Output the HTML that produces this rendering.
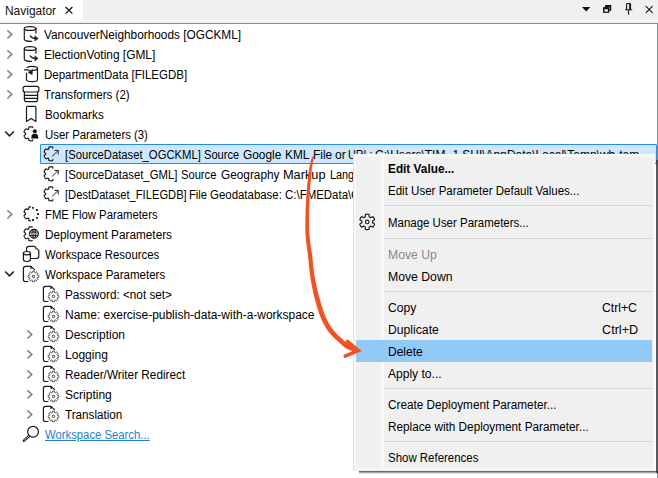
<!DOCTYPE html>
<html><head><meta charset="utf-8"><title>Navigator</title>
<style>
html,body{margin:0;padding:0;}
body{width:658px;height:478px;position:relative;overflow:hidden;background:#fff;font-family:"Liberation Sans",sans-serif;font-size:12px;color:#000;}
.abs{position:absolute;}
.t{position:absolute;transform-origin:0 0;white-space:nowrap;line-height:14px;font-size:12px;color:#000;}
.lnk{color:#1a7fd6;text-decoration:underline;}
.b{font-weight:bold;}
.dis{color:#8a8a8a;}
#hdr{color:#111;font-size:12.8px;}
#hbar{left:0;top:0;width:658px;height:20px;background:#f0f0f0;}
#tab{left:0;top:0;width:83px;height:20px;background:#fff;}
#hline{left:0;top:23px;width:658px;height:1px;background:#848c99;}
#hline2{left:0;top:21px;width:658px;height:2px;background:#f4f4f4;}
#vline{left:657px;top:23px;width:1px;height:455px;background:#848c99;}
#sel{left:40px;top:144px;width:615px;height:18px;background:#cce8ff;border:1px solid #2a8ae6;border-radius:1px;}
#treeclip{left:0;top:0;width:657px;height:478px;overflow:hidden;}
#shr{left:655.7px;top:160px;width:2.6px;height:313px;background:linear-gradient(to right,rgba(30,32,36,0.85),rgba(60,60,60,0.45));}
#shb{left:359px;top:470.6px;width:299px;height:3.4px;background:linear-gradient(to bottom,rgba(30,32,36,0.8),rgba(60,60,60,0.35) 60%,rgba(90,90,90,0));}
#menu{left:353px;top:154px;width:302.4px;height:316.6px;background:#f9f9f9;overflow:hidden;}
#menu .in{position:absolute;left:-353px;top:-154px;width:658px;height:478px;}
#mborder{left:353px;top:154px;width:1px;height:317px;background:#e0e0e0;}
#mborderb{left:353px;top:470px;width:303px;height:1px;background:#ececec;}
#mbg{left:356px;top:156.6px;width:296.8px;height:311.2px;background:#f0f0f0;}
#gutline{left:380.8px;top:156.6px;width:3.4px;height:310.8px;background:#f8f8f8;}
.sep{position:absolute;left:384.2px;width:267.8px;height:1px;background:#d7d7d7;}
#hl{left:356.2px;top:340px;width:295.8px;height:21.8px;background:#91c9f7;}
svg{position:absolute;left:0;top:0;}
</style></head><body>
<div class="abs" id="hbar"></div><div class="abs" id="tab"></div>
<div class="abs" id="hline2"></div><div class="abs" id="hline"></div><div class="abs" id="vline"></div>
<div class="abs" id="treeclip">
<div class="abs" id="sel"></div>
<span id="r1" class="t " style="left:44.3px;top:28.0px;transform:scaleX(0.9860)">VancouverNeighborhoods [OGCKML]</span>
<span id="r2" class="t " style="left:44.3px;top:48.0px;transform:scaleX(0.9932)">ElectionVoting [GML]</span>
<span id="r3" class="t " style="left:44.3px;top:68.0px;transform:scaleX(0.9579)">DepartmentData [FILEGDB]</span>
<span id="r4" class="t " style="left:44.3px;top:88.0px;transform:scaleX(0.9639)">Transformers (2)</span>
<span id="r5" class="t " style="left:44.8px;top:108.0px;transform:scaleX(0.9795)">Bookmarks</span>
<span id="r6" class="t " style="left:44.8px;top:128.0px;transform:scaleX(0.9466)">User Parameters (3)</span>
<span id="r7_0" class="t " style="left:65.1px;top:148.0px;transform:scaleX(0.9383)">[SourceDataset_OGCKML]</span>
<span id="r7_1" class="t " style="left:204.4px;top:148.0px;transform:scaleX(0.9256)">Source</span>
<span id="r7_2" class="t " style="left:243.3px;top:148.0px;transform:scaleX(0.9896)">Google</span>
<span id="r7_3" class="t " style="left:285.3px;top:148.0px;transform:scaleX(0.9843)">KML</span>
<span id="r7_4" class="t " style="left:312.9px;top:148.0px;transform:scaleX(0.9926)">File</span>
<span id="r7_5" class="t " style="left:335.3px;top:148.0px;transform:scaleX(1.0120)">or</span>
<span id="r7_6" class="t " style="left:348.0px;top:148.0px;transform:scaleX(0.8923)">URL:</span>
<span id="r7_7" class="t " style="left:375.3px;top:148.0px;transform:scaleX(0.9963)">C:\Users\TIM~1.SHI\AppData\Local\Temp\wb-tem</span>
<span id="r8_0" class="t " style="left:65.1px;top:168.0px;transform:scaleX(0.9475)">[SourceDataset_GML]</span>
<span id="r8_1" class="t " style="left:181.3px;top:168.0px;transform:scaleX(0.9308)">Source</span>
<span id="r8_2" class="t " style="left:220.8px;top:168.0px;transform:scaleX(0.9853)">Geography</span>
<span id="r8_3" class="t " style="left:282.9px;top:168.0px;transform:scaleX(1.0621)">Markup</span>
<span id="r8_4" class="t " style="left:329.7px;top:168.0px;transform:scaleX(0.9028)">Language</span>
<span id="r9_0" class="t " style="left:65.1px;top:188.0px;transform:scaleX(0.9310)">[DestDataset_FILEGDB]</span>
<span id="r9_1" class="t " style="left:189.3px;top:188.0px;transform:scaleX(0.9357)">File</span>
<span id="r9_2" class="t " style="left:209.7px;top:188.0px;transform:scaleX(0.9535)">Geodatabase:</span>
<span id="r9_3" class="t " style="left:284.5px;top:188.0px;transform:scaleX(0.9544)">C:\FMEData\</span>
<span id="r9_4" class="t " style="left:350.8px;top:188.0px;transform:scaleX(1.0713)">Output</span>
<span id="r10" class="t " style="left:44.8px;top:208.0px;transform:scaleX(0.9434)">FME Flow Parameters</span>
<span id="r11" class="t " style="left:44.8px;top:228.0px;transform:scaleX(0.9815)">Deployment Parameters</span>
<span id="r12" class="t " style="left:44.8px;top:248.0px;transform:scaleX(0.9477)">Workspace Resources</span>
<span id="r13" class="t " style="left:44.8px;top:268.0px;transform:scaleX(0.9604)">Workspace Parameters</span>
<span id="r14" class="t " style="left:65.1px;top:288.0px;transform:scaleX(0.9771)">Password: &lt;not set&gt;</span>
<span id="r15" class="t " style="left:65.1px;top:308.0px;transform:scaleX(0.9976)">Name: exercise-publish-data-with-a-workspace</span>
<span id="r16" class="t " style="left:65.1px;top:328.0px;transform:scaleX(0.9995)">Description</span>
<span id="r17" class="t " style="left:65.1px;top:348.0px;transform:scaleX(1.0042)">Logging</span>
<span id="r18" class="t " style="left:65.1px;top:368.0px;transform:scaleX(0.9813)">Reader/Writer Redirect</span>
<span id="r19" class="t " style="left:65.1px;top:388.0px;transform:scaleX(1.0024)">Scripting</span>
<span id="r20" class="t " style="left:65.1px;top:408.0px;transform:scaleX(0.9725)">Translation</span>
<span id="r21" class="t lnk" style="left:44.8px;top:428.0px;transform:scaleX(0.9418)">Workspace Search...</span>
<span id="hdr" class="t " style="left:5.3px;top:3.5px;transform:scaleX(0.9328)">Navigator</span>
<svg width="658" height="478" viewBox="0 0 658 478"><path d="M7.4 30.3 L11.8 34.4 L7.4 38.5" fill="none" stroke="#858585" stroke-width="1.6"/>
<path d="M7.4 50.3 L11.8 54.4 L7.4 58.5" fill="none" stroke="#858585" stroke-width="1.6"/>
<path d="M7.4 70.3 L11.8 74.4 L7.4 78.5" fill="none" stroke="#858585" stroke-width="1.6"/>
<path d="M7.4 90.3 L11.8 94.4 L7.4 98.5" fill="none" stroke="#858585" stroke-width="1.6"/>
<path d="M7.4 210.3 L11.8 214.4 L7.4 218.5" fill="none" stroke="#858585" stroke-width="1.6"/>
<path d="M27.4 330.3 L31.8 334.4 L27.4 338.5" fill="none" stroke="#858585" stroke-width="1.6"/>
<path d="M27.4 350.3 L31.8 354.4 L27.4 358.5" fill="none" stroke="#858585" stroke-width="1.6"/>
<path d="M27.4 370.3 L31.8 374.4 L27.4 378.5" fill="none" stroke="#858585" stroke-width="1.6"/>
<path d="M27.4 390.3 L31.8 394.4 L27.4 398.5" fill="none" stroke="#858585" stroke-width="1.6"/>
<path d="M27.4 410.3 L31.8 414.4 L27.4 418.5" fill="none" stroke="#858585" stroke-width="1.6"/>
<path d="M5.2 131.5 L9.5 135.8 L13.8 131.5" fill="none" stroke="#222" stroke-width="1.6"/>
<path d="M5.2 271.5 L9.5 275.8 L13.8 271.5" fill="none" stroke="#222" stroke-width="1.6"/>
<g transform="translate(0,0)" fill="none" stroke="#1a1a1a" stroke-width="1.2" stroke-linecap="round" stroke-linejoin="round"><ellipse cx="30.1" cy="28.5" rx="5.8" ry="1.95"/><path d="M24.3 28.3 V39.3 C24.3 40.6 27.5 41.6 31.6 41.4"/><path d="M35.9 28.3 V33.2"/><path d="M30.2 35.8 C31.4 37.6 32.6 38.4 35.6 38.4"/><path d="M35.1 36 L38.1 38.4 L35.1 40.8 Z" fill="#1a1a1a" stroke-width="0.6"/></g>
<g transform="translate(0,20)" fill="none" stroke="#1a1a1a" stroke-width="1.2" stroke-linecap="round" stroke-linejoin="round"><ellipse cx="30.1" cy="28.5" rx="5.8" ry="1.95"/><path d="M24.3 28.3 V39.3 C24.3 40.6 27.5 41.6 31.6 41.4"/><path d="M35.9 28.3 V33.2"/><path d="M30.2 35.8 C31.4 37.6 32.6 38.4 35.6 38.4"/><path d="M35.1 36 L38.1 38.4 L35.1 40.8 Z" fill="#1a1a1a" stroke-width="0.6"/></g>
<g fill="none" stroke="#1a1a1a" stroke-width="1.2" stroke-linecap="round" stroke-linejoin="round"><path d="M27.3 67.6 C28.5 66.7 30 66.4 32 66.4 C35 66.4 37.5 67.4 37.5 68.6 V79.5 C37.5 80.7 35 81.6 32 81.6 C29 81.6 26.5 80.7 26.5 79.5 V73.4"/><path d="M33 70.5 C35.5 70.3 37.5 69.6 37.5 68.6"/><path d="M24.4 69.9 H27.4 C29.2 69.9 30.4 71 31 72.6"/><path d="M32.6 69.3 L32.2 74.6 L28.3 72.7 Z" fill="#1a1a1a" stroke-width="0.5"/></g>
<g fill="none" stroke="#1a1a1a" stroke-width="1.2" stroke-linecap="round" stroke-linejoin="round"><rect x="23.1" y="86.3" width="15.8" height="5.7" rx="2"/><path d="M24.4 92 V99.4 C24.4 100.8 25.4 101.6 26.6 101.6 H35.4 C36.6 101.6 37.6 100.8 37.6 99.4 V92"/><path d="M24.4 95.3 H37.6 M24.4 98.4 H37.6"/></g>
<g fill="none" stroke="#1a1a1a" stroke-width="1.2" stroke-linecap="round" stroke-linejoin="round"><path d="M26.5 121.4 V107.4 C26.5 106.7 27 106.3 27.6 106.3 H34.8 C35.5 106.3 35.9 106.7 35.9 107.4 V121.4 L31.2 118.4 Z"/></g>
<path d="M32.78 127.71 L32.61 127.04 L32.26 126.95 L31.90 126.89 L31.53 126.84 L31.17 126.81 L30.80 126.80 L30.43 126.81 L30.07 126.84 L29.70 126.89 L29.34 126.95 L28.99 127.04 L28.82 127.71 L28.72 128.39 L28.68 129.05 L28.44 129.17 L28.20 129.30 L27.97 129.44 L27.74 129.59 L27.15 129.29 L26.52 129.04 L25.85 128.85 L25.60 129.12 L25.36 129.39 L25.14 129.69 L24.93 129.99 L24.74 130.30 L24.56 130.62 L24.41 130.95 L24.26 131.29 L24.14 131.64 L24.04 131.99 L24.54 132.47 L25.07 132.89 L25.63 133.26 L25.61 133.53 L25.60 133.80 L25.61 134.07 L25.63 134.34 L25.07 134.71 L24.54 135.13 L24.04 135.61 L24.14 135.96 L24.26 136.31 L24.41 136.65 L24.56 136.98 L24.74 137.30 L24.93 137.61 L25.14 137.91 L25.36 138.21 L25.60 138.48 L25.85 138.75 L26.52 138.56 L27.15 138.31 L27.74 138.01 L27.97 138.16 L28.20 138.30 L28.44 138.43 L28.68 138.55 L28.72 139.21 L28.82 139.89 L28.99 140.56 L29.34 140.65 L29.70 140.71 L30.07 140.76 L30.43 140.79 L30.80 140.80 L31.17 140.79 L31.53 140.76 L31.90 140.71 L32.26 140.65 L32.61 140.56 L32.78 139.89" fill="none" stroke="#1a1a1a" stroke-width="1.2" stroke-linejoin="round" stroke-linecap="round"/><circle cx="34.8" cy="131.2" r="2.05" fill="#111"/><path d="M31.1 138.5 L31.9 135.3 C32.2 134.2 33 133.7 33.9 133.7 H35.7 C36.6 133.7 37.4 134.2 37.7 135.3 L38.5 138.5 Z" fill="#111"/>
<path d="M52.85 148.16 L52.73 147.49 L52.61 147.04 L52.49 147.01 L52.14 146.93 L51.77 146.87 L51.41 146.83 L51.04 146.80 L50.68 146.80 L50.31 146.82 L49.95 146.85 L49.58 146.91 L49.23 146.98 L48.99 147.04 L48.93 147.26 L48.78 147.94 L48.70 148.61 L48.68 149.05 L48.60 149.09 L48.36 149.21 L48.12 149.34 L47.89 149.49 L47.74 149.59 L47.55 149.49 L46.94 149.20 L46.30 148.97 L45.85 148.85 L45.76 148.94 L45.52 149.21 L45.28 149.49 L45.07 149.78 L44.86 150.09 L44.68 150.41 L44.51 150.73 L44.36 151.06 L44.22 151.41 L44.11 151.75 L44.04 151.99 L44.20 152.15 L44.71 152.62 L45.25 153.02 L45.63 153.26 L45.62 153.35 L45.60 153.62 L45.60 153.89 L45.61 154.16 L45.63 154.34 L45.44 154.46 L44.89 154.84 L44.37 155.28 L44.04 155.61 L44.07 155.73 L44.18 156.08 L44.31 156.42 L44.46 156.76 L44.62 157.09 L44.80 157.41 L45.00 157.71 L45.21 158.01 L45.44 158.30 L45.68 158.57 L45.85 158.75 L46.08 158.69 L46.73 158.48 L47.35 158.21 L47.74 158.01 L47.82 158.06 L48.04 158.21 L48.28 158.35 L48.52 158.47 L48.68 158.55 L48.69 158.77 L48.75 159.44 L48.87 160.11 L48.99 160.56 L49.11 160.59 L49.46 160.67 L49.83 160.73 L50.19 160.77 L50.56 160.80 L50.92 160.80 L51.29 160.78 L51.65 160.75 L52.02 160.69 L52.37 160.62 L52.61 160.56 L52.67 160.34 L52.82 159.66 L52.85 159.44" fill="none" stroke="#1a1a1a" stroke-width="1.2" stroke-linejoin="round" stroke-linecap="round"/><path d="M52.4 156.2 L58.0 150.6 M54.7 150.4 H58.2 V154.1" fill="none" stroke="#222" stroke-width="1" stroke-linecap="round" stroke-linejoin="round"/>
<path d="M52.85 168.16 L52.73 167.49 L52.61 167.04 L52.49 167.01 L52.14 166.93 L51.77 166.87 L51.41 166.83 L51.04 166.80 L50.68 166.80 L50.31 166.82 L49.95 166.85 L49.58 166.91 L49.23 166.98 L48.99 167.04 L48.93 167.26 L48.78 167.94 L48.70 168.61 L48.68 169.05 L48.60 169.09 L48.36 169.21 L48.12 169.34 L47.89 169.49 L47.74 169.59 L47.55 169.49 L46.94 169.20 L46.30 168.97 L45.85 168.85 L45.76 168.94 L45.52 169.21 L45.28 169.49 L45.07 169.78 L44.86 170.09 L44.68 170.41 L44.51 170.73 L44.36 171.06 L44.22 171.41 L44.11 171.75 L44.04 171.99 L44.20 172.15 L44.71 172.62 L45.25 173.02 L45.63 173.26 L45.62 173.35 L45.60 173.62 L45.60 173.89 L45.61 174.16 L45.63 174.34 L45.44 174.46 L44.89 174.84 L44.37 175.28 L44.04 175.61 L44.07 175.73 L44.18 176.08 L44.31 176.42 L44.46 176.76 L44.62 177.09 L44.80 177.41 L45.00 177.71 L45.21 178.01 L45.44 178.30 L45.68 178.57 L45.85 178.75 L46.08 178.69 L46.73 178.48 L47.35 178.21 L47.74 178.01 L47.82 178.06 L48.04 178.21 L48.28 178.35 L48.52 178.47 L48.68 178.55 L48.69 178.77 L48.75 179.44 L48.87 180.11 L48.99 180.56 L49.11 180.59 L49.46 180.67 L49.83 180.73 L50.19 180.77 L50.56 180.80 L50.92 180.80 L51.29 180.78 L51.65 180.75 L52.02 180.69 L52.37 180.62 L52.61 180.56 L52.67 180.34 L52.82 179.66 L52.85 179.44" fill="none" stroke="#1a1a1a" stroke-width="1.2" stroke-linejoin="round" stroke-linecap="round"/><path d="M52.4 176.2 L58.0 170.6 M54.7 170.4 H58.2 V174.1" fill="none" stroke="#222" stroke-width="1" stroke-linecap="round" stroke-linejoin="round"/>
<path d="M52.85 188.16 L52.73 187.49 L52.61 187.04 L52.49 187.01 L52.14 186.93 L51.77 186.87 L51.41 186.83 L51.04 186.80 L50.68 186.80 L50.31 186.82 L49.95 186.85 L49.58 186.91 L49.23 186.98 L48.99 187.04 L48.93 187.26 L48.78 187.94 L48.70 188.61 L48.68 189.05 L48.60 189.09 L48.36 189.21 L48.12 189.34 L47.89 189.49 L47.74 189.59 L47.55 189.49 L46.94 189.20 L46.30 188.97 L45.85 188.85 L45.76 188.94 L45.52 189.21 L45.28 189.49 L45.07 189.78 L44.86 190.09 L44.68 190.41 L44.51 190.73 L44.36 191.06 L44.22 191.41 L44.11 191.75 L44.04 191.99 L44.20 192.15 L44.71 192.62 L45.25 193.02 L45.63 193.26 L45.62 193.35 L45.60 193.62 L45.60 193.89 L45.61 194.16 L45.63 194.34 L45.44 194.46 L44.89 194.84 L44.37 195.28 L44.04 195.61 L44.07 195.73 L44.18 196.08 L44.31 196.42 L44.46 196.76 L44.62 197.09 L44.80 197.41 L45.00 197.71 L45.21 198.01 L45.44 198.30 L45.68 198.57 L45.85 198.75 L46.08 198.69 L46.73 198.48 L47.35 198.21 L47.74 198.01 L47.82 198.06 L48.04 198.21 L48.28 198.35 L48.52 198.47 L48.68 198.55 L48.69 198.77 L48.75 199.44 L48.87 200.11 L48.99 200.56 L49.11 200.59 L49.46 200.67 L49.83 200.73 L50.19 200.77 L50.56 200.80 L50.92 200.80 L51.29 200.78 L51.65 200.75 L52.02 200.69 L52.37 200.62 L52.61 200.56 L52.67 200.34 L52.82 199.66 L52.85 199.44" fill="none" stroke="#1a1a1a" stroke-width="1.2" stroke-linejoin="round" stroke-linecap="round"/><path d="M52.4 196.2 L58.0 190.6 M54.7 190.4 H58.2 V194.1" fill="none" stroke="#222" stroke-width="1" stroke-linecap="round" stroke-linejoin="round"/>
<path d="M30.56 206.80 L30.19 206.83 L29.83 206.87 L29.46 206.93 L29.11 207.01 L28.99 207.04 L28.87 207.49 L28.75 208.16 L28.69 208.83 L28.68 209.05 L28.52 209.13 L28.28 209.25 L28.04 209.39 L27.82 209.54 L27.74 209.59 L27.35 209.39 L26.73 209.12 L26.08 208.91 L25.85 208.85 L25.68 209.03 L25.44 209.30 L25.21 209.59 L25.00 209.89 L24.80 210.19 L24.62 210.51 L24.46 210.84 L24.31 211.18 L24.18 211.52 L24.07 211.87 L24.04 211.99 L24.37 212.32 L24.89 212.76 L25.44 213.14 L25.63 213.26 L25.61 213.44 L25.60 213.71 L25.60 213.98 L25.62 214.25 L25.63 214.34 L25.25 214.58 L24.71 214.98 L24.20 215.45 L24.04 215.61 L24.11 215.85 L24.22 216.19 L24.36 216.54 L24.51 216.87 L24.68 217.19 L24.86 217.51 L25.07 217.82 L25.28 218.11 L25.52 218.39 L25.76 218.66 L25.85 218.75 L26.30 218.63 L26.94 218.40 L27.55 218.11 L27.74 218.01 L27.89 218.11 L28.12 218.26 L28.36 218.39 L28.60 218.51 L28.68 218.55 L28.70 218.99 L28.78 219.66 L28.93 220.34 L28.99 220.56 L29.23 220.62 L29.58 220.69 L29.95 220.75 L30.31 220.78 L30.56 220.80" fill="none" stroke="#1a1a1a" stroke-width="1.2" stroke-linejoin="round" stroke-linecap="round"/><rect x="32.0" y="206.9" width="1.9" height="1.9" rx="0.5" fill="#111"/><rect x="36.0" y="209.1" width="1.9" height="1.9" rx="0.5" fill="#111"/><rect x="37.1" y="213.1" width="1.9" height="1.9" rx="0.5" fill="#111"/><rect x="36.0" y="216.9" width="1.9" height="1.9" rx="0.5" fill="#111"/><rect x="32.0" y="219.0" width="1.9" height="1.9" rx="0.5" fill="#111"/>
<path d="M32.26 226.95 L31.90 226.89 L31.53 226.84 L31.17 226.81 L30.80 226.80 L30.43 226.81 L30.07 226.84 L29.70 226.89 L29.34 226.95 L28.99 227.04 L28.82 227.71 L28.72 228.39 L28.68 229.05 L28.44 229.17 L28.20 229.30 L27.97 229.44 L27.74 229.59 L27.15 229.29 L26.52 229.04 L25.85 228.85 L25.60 229.12 L25.36 229.39 L25.14 229.69 L24.93 229.99 L24.74 230.30 L24.56 230.62 L24.41 230.95 L24.26 231.29 L24.14 231.64 L24.04 231.99 L24.54 232.47 L25.07 232.89 L25.63 233.26 L25.61 233.53 L25.60 233.80 L25.61 234.07 L25.63 234.34 L25.07 234.71 L24.54 235.13 L24.04 235.61 L24.14 235.96 L24.26 236.31 L24.41 236.65 L24.56 236.98 L24.74 237.30 L24.93 237.61 L25.14 237.91 L25.36 238.21 L25.60 238.48 L25.85 238.75 L26.52 238.56 L27.15 238.31 L27.74 238.01 L27.97 238.16 L28.20 238.30 L28.44 238.43 L28.68 238.55 L28.72 239.21 L28.82 239.89 L28.99 240.56 L29.34 240.65 L29.70 240.71 L30.07 240.76 L30.43 240.79 L30.80 240.80 L31.17 240.79 L31.53 240.76 L31.90 240.71 L32.26 240.65" fill="none" stroke="#1a1a1a" stroke-width="1.2" stroke-linejoin="round" stroke-linecap="round"/><g fill="none" stroke="#1a1a1a"><circle cx="33.9" cy="233.8" r="4.4" stroke-width="1.3" fill="#fff"/><ellipse cx="33.9" cy="233.8" rx="2" ry="4.4" stroke-width="0.9"/><path d="M29.9 232.1 H37.9 M29.9 235.5 H37.9 M33.9 229.4 V238.2" stroke-width="0.9"/></g>
<g fill="none" stroke="#1a1a1a" stroke-width="1.2" stroke-linecap="round" stroke-linejoin="round"><path d="M26.5 251 V248.8 C26.5 247.3 27.6 246.3 29 246.3 H34.3 L38.8 250.4 V256.2 C38.8 257.6 37.8 258.5 36.4 258.5 H30.8"/><path d="M34.4 246.6 L34.9 249.3 L38.2 250.2 Z" fill="#888" stroke="none"/><path d="M23.4 253.3 C23.4 252.2 25 251.5 26.9 251.5 C28.9 251.5 30.4 252.2 30.4 253.3 V259.6 C30.4 260.8 28.9 261.5 26.9 261.5 C25 261.5 23.4 260.8 23.4 259.6 Z" fill="#fff"/><path d="M23.4 253.3 C23.4 254.3 25 254.9 26.9 254.9 C28.9 254.9 30.4 254.3 30.4 253.3"/></g>
<g transform="translate(0,0)"><path d="M28 281.5 H25.6 C24.2 281.5 23.4 280.6 23.4 279.4 V268.6 C23.4 267.3 24.2 266.4 25.6 266.4 H31 L34.6 269.6 M31 266.4 V268.6" fill="none" stroke="#1a1a1a" stroke-width="1.2" stroke-linecap="round" stroke-linejoin="round"/><path d="M38.80 276.40 L38.79 276.12 L38.77 275.85 L38.73 275.57 L38.71 275.43 L38.39 275.36 L37.75 275.26 L37.43 275.24 L37.40 275.13 L37.33 274.93 L37.25 274.73 L37.15 274.54 L37.10 274.44 L37.31 274.20 L37.69 273.68 L37.87 273.40 L37.79 273.28 L37.62 273.06 L37.44 272.85 L37.25 272.65 L37.05 272.46 L36.84 272.28 L36.62 272.11 L36.50 272.03 L36.22 272.21 L35.70 272.59 L35.46 272.80 L35.36 272.75 L35.17 272.65 L34.97 272.57 L34.77 272.50 L34.66 272.47 L34.64 272.15 L34.54 271.51 L34.47 271.19 L34.33 271.17 L34.05 271.13 L33.78 271.11 L33.50 271.10 L33.22 271.11 L32.95 271.13 L32.67 271.17 L32.53 271.19 L32.46 271.51 L32.36 272.15 L32.34 272.47 L32.23 272.50 L32.03 272.57 L31.83 272.65 L31.64 272.75 L31.54 272.80 L31.30 272.59 L30.78 272.21 L30.50 272.03 L30.38 272.11 L30.16 272.28 L29.95 272.46 L29.75 272.65 L29.56 272.85 L29.38 273.06 L29.21 273.28 L29.13 273.40 L29.31 273.68 L29.69 274.20 L29.90 274.44 L29.85 274.54 L29.75 274.73 L29.67 274.93 L29.60 275.13 L29.57 275.24 L29.25 275.26 L28.61 275.36 L28.29 275.43 L28.27 275.57 L28.23 275.85 L28.21 276.12 L28.20 276.40 L28.21 276.68 L28.23 276.95 L28.27 277.23 L28.29 277.37 L28.61 277.44 L29.25 277.54 L29.57 277.56 L29.60 277.67 L29.67 277.87 L29.75 278.07 L29.85 278.26 L29.90 278.36 L29.69 278.60 L29.31 279.12 L29.13 279.40 L29.21 279.52 L29.38 279.74 L29.56 279.95 L29.75 280.15 L29.95 280.34 L30.16 280.52 L30.38 280.69 L30.50 280.77 L30.78 280.59 L31.30 280.21 L31.54 280.00 L31.64 280.05 L31.83 280.15 L32.03 280.23 L32.23 280.30 L32.34 280.33 L32.36 280.65 L32.46 281.29 L32.53 281.61 L32.67 281.63 L32.95 281.67 L33.22 281.69 L33.50 281.70 L33.78 281.69 L34.05 281.67 L34.33 281.63 L34.47 281.61 L34.54 281.29 L34.64 280.65 L34.66 280.33 L34.77 280.30 L34.97 280.23 L35.17 280.15 L35.36 280.05 L35.46 280.00 L35.70 280.21 L36.22 280.59 L36.50 280.77 L36.62 280.69 L36.84 280.52 L37.05 280.34 L37.25 280.15 L37.44 279.95 L37.62 279.74 L37.79 279.52 L37.87 279.40 L37.69 279.12 L37.31 278.60 L37.10 278.36 L37.15 278.26 L37.25 278.07 L37.33 277.87 L37.40 277.67 L37.43 277.56 L37.75 277.54 L38.39 277.44 L38.71 277.37 L38.73 277.23 L38.77 276.95 L38.79 276.68 L38.80 276.40Z" fill="none" stroke="#333" stroke-width="1" stroke-linejoin="round"/><circle cx="33.5" cy="276.4" r="1.2" fill="none" stroke="#333" stroke-width="1"/></g>
<g transform="translate(20,20)"><path d="M28 281.5 H25.6 C24.2 281.5 23.4 280.6 23.4 279.4 V268.6 C23.4 267.3 24.2 266.4 25.6 266.4 H31 L34.6 269.6 M31 266.4 V268.6" fill="none" stroke="#1a1a1a" stroke-width="1.2" stroke-linecap="round" stroke-linejoin="round"/><path d="M38.80 276.40 L38.79 276.12 L38.77 275.85 L38.73 275.57 L38.71 275.43 L38.39 275.36 L37.75 275.26 L37.43 275.24 L37.40 275.13 L37.33 274.93 L37.25 274.73 L37.15 274.54 L37.10 274.44 L37.31 274.20 L37.69 273.68 L37.87 273.40 L37.79 273.28 L37.62 273.06 L37.44 272.85 L37.25 272.65 L37.05 272.46 L36.84 272.28 L36.62 272.11 L36.50 272.03 L36.22 272.21 L35.70 272.59 L35.46 272.80 L35.36 272.75 L35.17 272.65 L34.97 272.57 L34.77 272.50 L34.66 272.47 L34.64 272.15 L34.54 271.51 L34.47 271.19 L34.33 271.17 L34.05 271.13 L33.78 271.11 L33.50 271.10 L33.22 271.11 L32.95 271.13 L32.67 271.17 L32.53 271.19 L32.46 271.51 L32.36 272.15 L32.34 272.47 L32.23 272.50 L32.03 272.57 L31.83 272.65 L31.64 272.75 L31.54 272.80 L31.30 272.59 L30.78 272.21 L30.50 272.03 L30.38 272.11 L30.16 272.28 L29.95 272.46 L29.75 272.65 L29.56 272.85 L29.38 273.06 L29.21 273.28 L29.13 273.40 L29.31 273.68 L29.69 274.20 L29.90 274.44 L29.85 274.54 L29.75 274.73 L29.67 274.93 L29.60 275.13 L29.57 275.24 L29.25 275.26 L28.61 275.36 L28.29 275.43 L28.27 275.57 L28.23 275.85 L28.21 276.12 L28.20 276.40 L28.21 276.68 L28.23 276.95 L28.27 277.23 L28.29 277.37 L28.61 277.44 L29.25 277.54 L29.57 277.56 L29.60 277.67 L29.67 277.87 L29.75 278.07 L29.85 278.26 L29.90 278.36 L29.69 278.60 L29.31 279.12 L29.13 279.40 L29.21 279.52 L29.38 279.74 L29.56 279.95 L29.75 280.15 L29.95 280.34 L30.16 280.52 L30.38 280.69 L30.50 280.77 L30.78 280.59 L31.30 280.21 L31.54 280.00 L31.64 280.05 L31.83 280.15 L32.03 280.23 L32.23 280.30 L32.34 280.33 L32.36 280.65 L32.46 281.29 L32.53 281.61 L32.67 281.63 L32.95 281.67 L33.22 281.69 L33.50 281.70 L33.78 281.69 L34.05 281.67 L34.33 281.63 L34.47 281.61 L34.54 281.29 L34.64 280.65 L34.66 280.33 L34.77 280.30 L34.97 280.23 L35.17 280.15 L35.36 280.05 L35.46 280.00 L35.70 280.21 L36.22 280.59 L36.50 280.77 L36.62 280.69 L36.84 280.52 L37.05 280.34 L37.25 280.15 L37.44 279.95 L37.62 279.74 L37.79 279.52 L37.87 279.40 L37.69 279.12 L37.31 278.60 L37.10 278.36 L37.15 278.26 L37.25 278.07 L37.33 277.87 L37.40 277.67 L37.43 277.56 L37.75 277.54 L38.39 277.44 L38.71 277.37 L38.73 277.23 L38.77 276.95 L38.79 276.68 L38.80 276.40Z" fill="none" stroke="#333" stroke-width="1" stroke-linejoin="round"/><circle cx="33.5" cy="276.4" r="1.2" fill="none" stroke="#333" stroke-width="1"/></g>
<g transform="translate(20,40)"><path d="M28 281.5 H25.6 C24.2 281.5 23.4 280.6 23.4 279.4 V268.6 C23.4 267.3 24.2 266.4 25.6 266.4 H31 L34.6 269.6 M31 266.4 V268.6" fill="none" stroke="#1a1a1a" stroke-width="1.2" stroke-linecap="round" stroke-linejoin="round"/><path d="M38.80 276.40 L38.79 276.12 L38.77 275.85 L38.73 275.57 L38.71 275.43 L38.39 275.36 L37.75 275.26 L37.43 275.24 L37.40 275.13 L37.33 274.93 L37.25 274.73 L37.15 274.54 L37.10 274.44 L37.31 274.20 L37.69 273.68 L37.87 273.40 L37.79 273.28 L37.62 273.06 L37.44 272.85 L37.25 272.65 L37.05 272.46 L36.84 272.28 L36.62 272.11 L36.50 272.03 L36.22 272.21 L35.70 272.59 L35.46 272.80 L35.36 272.75 L35.17 272.65 L34.97 272.57 L34.77 272.50 L34.66 272.47 L34.64 272.15 L34.54 271.51 L34.47 271.19 L34.33 271.17 L34.05 271.13 L33.78 271.11 L33.50 271.10 L33.22 271.11 L32.95 271.13 L32.67 271.17 L32.53 271.19 L32.46 271.51 L32.36 272.15 L32.34 272.47 L32.23 272.50 L32.03 272.57 L31.83 272.65 L31.64 272.75 L31.54 272.80 L31.30 272.59 L30.78 272.21 L30.50 272.03 L30.38 272.11 L30.16 272.28 L29.95 272.46 L29.75 272.65 L29.56 272.85 L29.38 273.06 L29.21 273.28 L29.13 273.40 L29.31 273.68 L29.69 274.20 L29.90 274.44 L29.85 274.54 L29.75 274.73 L29.67 274.93 L29.60 275.13 L29.57 275.24 L29.25 275.26 L28.61 275.36 L28.29 275.43 L28.27 275.57 L28.23 275.85 L28.21 276.12 L28.20 276.40 L28.21 276.68 L28.23 276.95 L28.27 277.23 L28.29 277.37 L28.61 277.44 L29.25 277.54 L29.57 277.56 L29.60 277.67 L29.67 277.87 L29.75 278.07 L29.85 278.26 L29.90 278.36 L29.69 278.60 L29.31 279.12 L29.13 279.40 L29.21 279.52 L29.38 279.74 L29.56 279.95 L29.75 280.15 L29.95 280.34 L30.16 280.52 L30.38 280.69 L30.50 280.77 L30.78 280.59 L31.30 280.21 L31.54 280.00 L31.64 280.05 L31.83 280.15 L32.03 280.23 L32.23 280.30 L32.34 280.33 L32.36 280.65 L32.46 281.29 L32.53 281.61 L32.67 281.63 L32.95 281.67 L33.22 281.69 L33.50 281.70 L33.78 281.69 L34.05 281.67 L34.33 281.63 L34.47 281.61 L34.54 281.29 L34.64 280.65 L34.66 280.33 L34.77 280.30 L34.97 280.23 L35.17 280.15 L35.36 280.05 L35.46 280.00 L35.70 280.21 L36.22 280.59 L36.50 280.77 L36.62 280.69 L36.84 280.52 L37.05 280.34 L37.25 280.15 L37.44 279.95 L37.62 279.74 L37.79 279.52 L37.87 279.40 L37.69 279.12 L37.31 278.60 L37.10 278.36 L37.15 278.26 L37.25 278.07 L37.33 277.87 L37.40 277.67 L37.43 277.56 L37.75 277.54 L38.39 277.44 L38.71 277.37 L38.73 277.23 L38.77 276.95 L38.79 276.68 L38.80 276.40Z" fill="none" stroke="#333" stroke-width="1" stroke-linejoin="round"/><circle cx="33.5" cy="276.4" r="1.2" fill="none" stroke="#333" stroke-width="1"/></g>
<g transform="translate(20,60)"><path d="M28 281.5 H25.6 C24.2 281.5 23.4 280.6 23.4 279.4 V268.6 C23.4 267.3 24.2 266.4 25.6 266.4 H31 L34.6 269.6 M31 266.4 V268.6" fill="none" stroke="#1a1a1a" stroke-width="1.2" stroke-linecap="round" stroke-linejoin="round"/><path d="M38.80 276.40 L38.79 276.12 L38.77 275.85 L38.73 275.57 L38.71 275.43 L38.39 275.36 L37.75 275.26 L37.43 275.24 L37.40 275.13 L37.33 274.93 L37.25 274.73 L37.15 274.54 L37.10 274.44 L37.31 274.20 L37.69 273.68 L37.87 273.40 L37.79 273.28 L37.62 273.06 L37.44 272.85 L37.25 272.65 L37.05 272.46 L36.84 272.28 L36.62 272.11 L36.50 272.03 L36.22 272.21 L35.70 272.59 L35.46 272.80 L35.36 272.75 L35.17 272.65 L34.97 272.57 L34.77 272.50 L34.66 272.47 L34.64 272.15 L34.54 271.51 L34.47 271.19 L34.33 271.17 L34.05 271.13 L33.78 271.11 L33.50 271.10 L33.22 271.11 L32.95 271.13 L32.67 271.17 L32.53 271.19 L32.46 271.51 L32.36 272.15 L32.34 272.47 L32.23 272.50 L32.03 272.57 L31.83 272.65 L31.64 272.75 L31.54 272.80 L31.30 272.59 L30.78 272.21 L30.50 272.03 L30.38 272.11 L30.16 272.28 L29.95 272.46 L29.75 272.65 L29.56 272.85 L29.38 273.06 L29.21 273.28 L29.13 273.40 L29.31 273.68 L29.69 274.20 L29.90 274.44 L29.85 274.54 L29.75 274.73 L29.67 274.93 L29.60 275.13 L29.57 275.24 L29.25 275.26 L28.61 275.36 L28.29 275.43 L28.27 275.57 L28.23 275.85 L28.21 276.12 L28.20 276.40 L28.21 276.68 L28.23 276.95 L28.27 277.23 L28.29 277.37 L28.61 277.44 L29.25 277.54 L29.57 277.56 L29.60 277.67 L29.67 277.87 L29.75 278.07 L29.85 278.26 L29.90 278.36 L29.69 278.60 L29.31 279.12 L29.13 279.40 L29.21 279.52 L29.38 279.74 L29.56 279.95 L29.75 280.15 L29.95 280.34 L30.16 280.52 L30.38 280.69 L30.50 280.77 L30.78 280.59 L31.30 280.21 L31.54 280.00 L31.64 280.05 L31.83 280.15 L32.03 280.23 L32.23 280.30 L32.34 280.33 L32.36 280.65 L32.46 281.29 L32.53 281.61 L32.67 281.63 L32.95 281.67 L33.22 281.69 L33.50 281.70 L33.78 281.69 L34.05 281.67 L34.33 281.63 L34.47 281.61 L34.54 281.29 L34.64 280.65 L34.66 280.33 L34.77 280.30 L34.97 280.23 L35.17 280.15 L35.36 280.05 L35.46 280.00 L35.70 280.21 L36.22 280.59 L36.50 280.77 L36.62 280.69 L36.84 280.52 L37.05 280.34 L37.25 280.15 L37.44 279.95 L37.62 279.74 L37.79 279.52 L37.87 279.40 L37.69 279.12 L37.31 278.60 L37.10 278.36 L37.15 278.26 L37.25 278.07 L37.33 277.87 L37.40 277.67 L37.43 277.56 L37.75 277.54 L38.39 277.44 L38.71 277.37 L38.73 277.23 L38.77 276.95 L38.79 276.68 L38.80 276.40Z" fill="none" stroke="#333" stroke-width="1" stroke-linejoin="round"/><circle cx="33.5" cy="276.4" r="1.2" fill="none" stroke="#333" stroke-width="1"/></g>
<g transform="translate(20,80)"><path d="M28 281.5 H25.6 C24.2 281.5 23.4 280.6 23.4 279.4 V268.6 C23.4 267.3 24.2 266.4 25.6 266.4 H31 L34.6 269.6 M31 266.4 V268.6" fill="none" stroke="#1a1a1a" stroke-width="1.2" stroke-linecap="round" stroke-linejoin="round"/><path d="M38.80 276.40 L38.79 276.12 L38.77 275.85 L38.73 275.57 L38.71 275.43 L38.39 275.36 L37.75 275.26 L37.43 275.24 L37.40 275.13 L37.33 274.93 L37.25 274.73 L37.15 274.54 L37.10 274.44 L37.31 274.20 L37.69 273.68 L37.87 273.40 L37.79 273.28 L37.62 273.06 L37.44 272.85 L37.25 272.65 L37.05 272.46 L36.84 272.28 L36.62 272.11 L36.50 272.03 L36.22 272.21 L35.70 272.59 L35.46 272.80 L35.36 272.75 L35.17 272.65 L34.97 272.57 L34.77 272.50 L34.66 272.47 L34.64 272.15 L34.54 271.51 L34.47 271.19 L34.33 271.17 L34.05 271.13 L33.78 271.11 L33.50 271.10 L33.22 271.11 L32.95 271.13 L32.67 271.17 L32.53 271.19 L32.46 271.51 L32.36 272.15 L32.34 272.47 L32.23 272.50 L32.03 272.57 L31.83 272.65 L31.64 272.75 L31.54 272.80 L31.30 272.59 L30.78 272.21 L30.50 272.03 L30.38 272.11 L30.16 272.28 L29.95 272.46 L29.75 272.65 L29.56 272.85 L29.38 273.06 L29.21 273.28 L29.13 273.40 L29.31 273.68 L29.69 274.20 L29.90 274.44 L29.85 274.54 L29.75 274.73 L29.67 274.93 L29.60 275.13 L29.57 275.24 L29.25 275.26 L28.61 275.36 L28.29 275.43 L28.27 275.57 L28.23 275.85 L28.21 276.12 L28.20 276.40 L28.21 276.68 L28.23 276.95 L28.27 277.23 L28.29 277.37 L28.61 277.44 L29.25 277.54 L29.57 277.56 L29.60 277.67 L29.67 277.87 L29.75 278.07 L29.85 278.26 L29.90 278.36 L29.69 278.60 L29.31 279.12 L29.13 279.40 L29.21 279.52 L29.38 279.74 L29.56 279.95 L29.75 280.15 L29.95 280.34 L30.16 280.52 L30.38 280.69 L30.50 280.77 L30.78 280.59 L31.30 280.21 L31.54 280.00 L31.64 280.05 L31.83 280.15 L32.03 280.23 L32.23 280.30 L32.34 280.33 L32.36 280.65 L32.46 281.29 L32.53 281.61 L32.67 281.63 L32.95 281.67 L33.22 281.69 L33.50 281.70 L33.78 281.69 L34.05 281.67 L34.33 281.63 L34.47 281.61 L34.54 281.29 L34.64 280.65 L34.66 280.33 L34.77 280.30 L34.97 280.23 L35.17 280.15 L35.36 280.05 L35.46 280.00 L35.70 280.21 L36.22 280.59 L36.50 280.77 L36.62 280.69 L36.84 280.52 L37.05 280.34 L37.25 280.15 L37.44 279.95 L37.62 279.74 L37.79 279.52 L37.87 279.40 L37.69 279.12 L37.31 278.60 L37.10 278.36 L37.15 278.26 L37.25 278.07 L37.33 277.87 L37.40 277.67 L37.43 277.56 L37.75 277.54 L38.39 277.44 L38.71 277.37 L38.73 277.23 L38.77 276.95 L38.79 276.68 L38.80 276.40Z" fill="none" stroke="#333" stroke-width="1" stroke-linejoin="round"/><circle cx="33.5" cy="276.4" r="1.2" fill="none" stroke="#333" stroke-width="1"/></g>
<g transform="translate(20,100)"><path d="M28 281.5 H25.6 C24.2 281.5 23.4 280.6 23.4 279.4 V268.6 C23.4 267.3 24.2 266.4 25.6 266.4 H31 L34.6 269.6 M31 266.4 V268.6" fill="none" stroke="#1a1a1a" stroke-width="1.2" stroke-linecap="round" stroke-linejoin="round"/><path d="M38.80 276.40 L38.79 276.12 L38.77 275.85 L38.73 275.57 L38.71 275.43 L38.39 275.36 L37.75 275.26 L37.43 275.24 L37.40 275.13 L37.33 274.93 L37.25 274.73 L37.15 274.54 L37.10 274.44 L37.31 274.20 L37.69 273.68 L37.87 273.40 L37.79 273.28 L37.62 273.06 L37.44 272.85 L37.25 272.65 L37.05 272.46 L36.84 272.28 L36.62 272.11 L36.50 272.03 L36.22 272.21 L35.70 272.59 L35.46 272.80 L35.36 272.75 L35.17 272.65 L34.97 272.57 L34.77 272.50 L34.66 272.47 L34.64 272.15 L34.54 271.51 L34.47 271.19 L34.33 271.17 L34.05 271.13 L33.78 271.11 L33.50 271.10 L33.22 271.11 L32.95 271.13 L32.67 271.17 L32.53 271.19 L32.46 271.51 L32.36 272.15 L32.34 272.47 L32.23 272.50 L32.03 272.57 L31.83 272.65 L31.64 272.75 L31.54 272.80 L31.30 272.59 L30.78 272.21 L30.50 272.03 L30.38 272.11 L30.16 272.28 L29.95 272.46 L29.75 272.65 L29.56 272.85 L29.38 273.06 L29.21 273.28 L29.13 273.40 L29.31 273.68 L29.69 274.20 L29.90 274.44 L29.85 274.54 L29.75 274.73 L29.67 274.93 L29.60 275.13 L29.57 275.24 L29.25 275.26 L28.61 275.36 L28.29 275.43 L28.27 275.57 L28.23 275.85 L28.21 276.12 L28.20 276.40 L28.21 276.68 L28.23 276.95 L28.27 277.23 L28.29 277.37 L28.61 277.44 L29.25 277.54 L29.57 277.56 L29.60 277.67 L29.67 277.87 L29.75 278.07 L29.85 278.26 L29.90 278.36 L29.69 278.60 L29.31 279.12 L29.13 279.40 L29.21 279.52 L29.38 279.74 L29.56 279.95 L29.75 280.15 L29.95 280.34 L30.16 280.52 L30.38 280.69 L30.50 280.77 L30.78 280.59 L31.30 280.21 L31.54 280.00 L31.64 280.05 L31.83 280.15 L32.03 280.23 L32.23 280.30 L32.34 280.33 L32.36 280.65 L32.46 281.29 L32.53 281.61 L32.67 281.63 L32.95 281.67 L33.22 281.69 L33.50 281.70 L33.78 281.69 L34.05 281.67 L34.33 281.63 L34.47 281.61 L34.54 281.29 L34.64 280.65 L34.66 280.33 L34.77 280.30 L34.97 280.23 L35.17 280.15 L35.36 280.05 L35.46 280.00 L35.70 280.21 L36.22 280.59 L36.50 280.77 L36.62 280.69 L36.84 280.52 L37.05 280.34 L37.25 280.15 L37.44 279.95 L37.62 279.74 L37.79 279.52 L37.87 279.40 L37.69 279.12 L37.31 278.60 L37.10 278.36 L37.15 278.26 L37.25 278.07 L37.33 277.87 L37.40 277.67 L37.43 277.56 L37.75 277.54 L38.39 277.44 L38.71 277.37 L38.73 277.23 L38.77 276.95 L38.79 276.68 L38.80 276.40Z" fill="none" stroke="#333" stroke-width="1" stroke-linejoin="round"/><circle cx="33.5" cy="276.4" r="1.2" fill="none" stroke="#333" stroke-width="1"/></g>
<g transform="translate(20,120)"><path d="M28 281.5 H25.6 C24.2 281.5 23.4 280.6 23.4 279.4 V268.6 C23.4 267.3 24.2 266.4 25.6 266.4 H31 L34.6 269.6 M31 266.4 V268.6" fill="none" stroke="#1a1a1a" stroke-width="1.2" stroke-linecap="round" stroke-linejoin="round"/><path d="M38.80 276.40 L38.79 276.12 L38.77 275.85 L38.73 275.57 L38.71 275.43 L38.39 275.36 L37.75 275.26 L37.43 275.24 L37.40 275.13 L37.33 274.93 L37.25 274.73 L37.15 274.54 L37.10 274.44 L37.31 274.20 L37.69 273.68 L37.87 273.40 L37.79 273.28 L37.62 273.06 L37.44 272.85 L37.25 272.65 L37.05 272.46 L36.84 272.28 L36.62 272.11 L36.50 272.03 L36.22 272.21 L35.70 272.59 L35.46 272.80 L35.36 272.75 L35.17 272.65 L34.97 272.57 L34.77 272.50 L34.66 272.47 L34.64 272.15 L34.54 271.51 L34.47 271.19 L34.33 271.17 L34.05 271.13 L33.78 271.11 L33.50 271.10 L33.22 271.11 L32.95 271.13 L32.67 271.17 L32.53 271.19 L32.46 271.51 L32.36 272.15 L32.34 272.47 L32.23 272.50 L32.03 272.57 L31.83 272.65 L31.64 272.75 L31.54 272.80 L31.30 272.59 L30.78 272.21 L30.50 272.03 L30.38 272.11 L30.16 272.28 L29.95 272.46 L29.75 272.65 L29.56 272.85 L29.38 273.06 L29.21 273.28 L29.13 273.40 L29.31 273.68 L29.69 274.20 L29.90 274.44 L29.85 274.54 L29.75 274.73 L29.67 274.93 L29.60 275.13 L29.57 275.24 L29.25 275.26 L28.61 275.36 L28.29 275.43 L28.27 275.57 L28.23 275.85 L28.21 276.12 L28.20 276.40 L28.21 276.68 L28.23 276.95 L28.27 277.23 L28.29 277.37 L28.61 277.44 L29.25 277.54 L29.57 277.56 L29.60 277.67 L29.67 277.87 L29.75 278.07 L29.85 278.26 L29.90 278.36 L29.69 278.60 L29.31 279.12 L29.13 279.40 L29.21 279.52 L29.38 279.74 L29.56 279.95 L29.75 280.15 L29.95 280.34 L30.16 280.52 L30.38 280.69 L30.50 280.77 L30.78 280.59 L31.30 280.21 L31.54 280.00 L31.64 280.05 L31.83 280.15 L32.03 280.23 L32.23 280.30 L32.34 280.33 L32.36 280.65 L32.46 281.29 L32.53 281.61 L32.67 281.63 L32.95 281.67 L33.22 281.69 L33.50 281.70 L33.78 281.69 L34.05 281.67 L34.33 281.63 L34.47 281.61 L34.54 281.29 L34.64 280.65 L34.66 280.33 L34.77 280.30 L34.97 280.23 L35.17 280.15 L35.36 280.05 L35.46 280.00 L35.70 280.21 L36.22 280.59 L36.50 280.77 L36.62 280.69 L36.84 280.52 L37.05 280.34 L37.25 280.15 L37.44 279.95 L37.62 279.74 L37.79 279.52 L37.87 279.40 L37.69 279.12 L37.31 278.60 L37.10 278.36 L37.15 278.26 L37.25 278.07 L37.33 277.87 L37.40 277.67 L37.43 277.56 L37.75 277.54 L38.39 277.44 L38.71 277.37 L38.73 277.23 L38.77 276.95 L38.79 276.68 L38.80 276.40Z" fill="none" stroke="#333" stroke-width="1" stroke-linejoin="round"/><circle cx="33.5" cy="276.4" r="1.2" fill="none" stroke="#333" stroke-width="1"/></g>
<g transform="translate(20,140)"><path d="M28 281.5 H25.6 C24.2 281.5 23.4 280.6 23.4 279.4 V268.6 C23.4 267.3 24.2 266.4 25.6 266.4 H31 L34.6 269.6 M31 266.4 V268.6" fill="none" stroke="#1a1a1a" stroke-width="1.2" stroke-linecap="round" stroke-linejoin="round"/><path d="M38.80 276.40 L38.79 276.12 L38.77 275.85 L38.73 275.57 L38.71 275.43 L38.39 275.36 L37.75 275.26 L37.43 275.24 L37.40 275.13 L37.33 274.93 L37.25 274.73 L37.15 274.54 L37.10 274.44 L37.31 274.20 L37.69 273.68 L37.87 273.40 L37.79 273.28 L37.62 273.06 L37.44 272.85 L37.25 272.65 L37.05 272.46 L36.84 272.28 L36.62 272.11 L36.50 272.03 L36.22 272.21 L35.70 272.59 L35.46 272.80 L35.36 272.75 L35.17 272.65 L34.97 272.57 L34.77 272.50 L34.66 272.47 L34.64 272.15 L34.54 271.51 L34.47 271.19 L34.33 271.17 L34.05 271.13 L33.78 271.11 L33.50 271.10 L33.22 271.11 L32.95 271.13 L32.67 271.17 L32.53 271.19 L32.46 271.51 L32.36 272.15 L32.34 272.47 L32.23 272.50 L32.03 272.57 L31.83 272.65 L31.64 272.75 L31.54 272.80 L31.30 272.59 L30.78 272.21 L30.50 272.03 L30.38 272.11 L30.16 272.28 L29.95 272.46 L29.75 272.65 L29.56 272.85 L29.38 273.06 L29.21 273.28 L29.13 273.40 L29.31 273.68 L29.69 274.20 L29.90 274.44 L29.85 274.54 L29.75 274.73 L29.67 274.93 L29.60 275.13 L29.57 275.24 L29.25 275.26 L28.61 275.36 L28.29 275.43 L28.27 275.57 L28.23 275.85 L28.21 276.12 L28.20 276.40 L28.21 276.68 L28.23 276.95 L28.27 277.23 L28.29 277.37 L28.61 277.44 L29.25 277.54 L29.57 277.56 L29.60 277.67 L29.67 277.87 L29.75 278.07 L29.85 278.26 L29.90 278.36 L29.69 278.60 L29.31 279.12 L29.13 279.40 L29.21 279.52 L29.38 279.74 L29.56 279.95 L29.75 280.15 L29.95 280.34 L30.16 280.52 L30.38 280.69 L30.50 280.77 L30.78 280.59 L31.30 280.21 L31.54 280.00 L31.64 280.05 L31.83 280.15 L32.03 280.23 L32.23 280.30 L32.34 280.33 L32.36 280.65 L32.46 281.29 L32.53 281.61 L32.67 281.63 L32.95 281.67 L33.22 281.69 L33.50 281.70 L33.78 281.69 L34.05 281.67 L34.33 281.63 L34.47 281.61 L34.54 281.29 L34.64 280.65 L34.66 280.33 L34.77 280.30 L34.97 280.23 L35.17 280.15 L35.36 280.05 L35.46 280.00 L35.70 280.21 L36.22 280.59 L36.50 280.77 L36.62 280.69 L36.84 280.52 L37.05 280.34 L37.25 280.15 L37.44 279.95 L37.62 279.74 L37.79 279.52 L37.87 279.40 L37.69 279.12 L37.31 278.60 L37.10 278.36 L37.15 278.26 L37.25 278.07 L37.33 277.87 L37.40 277.67 L37.43 277.56 L37.75 277.54 L38.39 277.44 L38.71 277.37 L38.73 277.23 L38.77 276.95 L38.79 276.68 L38.80 276.40Z" fill="none" stroke="#333" stroke-width="1" stroke-linejoin="round"/><circle cx="33.5" cy="276.4" r="1.2" fill="none" stroke="#333" stroke-width="1"/></g>
<g fill="none" stroke-linecap="round"><circle cx="33.05" cy="431.8" r="5.4" stroke="#1a1a1a" stroke-width="1.2"/><path d="M28.9 436.2 L24 440.6" stroke="#1a1a1a" stroke-width="2.6"/><path d="M28.8 436.3 L24.2 440.4" stroke="#fff" stroke-width="0.7"/></g>
<path d="M582 7 H590.4 L586.2 11.4 Z" fill="#111"/><g fill="none" stroke="#111" stroke-width="1.3"><path d="M605.8 7.4 V5.6 H610.6 V10 H608.8"/><path d="M605.5 6.3 H610.6" stroke-width="1.8"/><rect x="603.7" y="7.8" width="5" height="4.4"/><path d="M603.7 8.4 H608.7" stroke-width="1.8"/></g><g fill="none" stroke="#111" stroke-width="1.1"><path d="M626.6 9.6 V4.4 C626.6 3.8 627 3.5 627.5 3.5 H629.6 C630.1 3.5 630.5 3.8 630.5 4.4 V9.6"/><path d="M630 3.8 V9.6" stroke-width="1.6"/><path d="M625 9.8 H632.2 M628.6 9.8 V14.6"/></g><path d="M645.8 6.2 L652.6 12.8 M652.6 6.2 L645.8 12.8" stroke="#111" stroke-width="1.1" fill="none"/><path d="M65.6 7 L72.4 13.6 M72.4 7 L65.6 13.6" stroke="#111" stroke-width="1.25" fill="none"/></svg>
</div>
<div class="abs" id="shr"></div><div class="abs" id="shb"></div>
<div class="abs" id="menu"><div class="in">
<div class="abs" id="mborder"></div><div class="abs" id="mborderb"></div><div class="abs" id="mbg"></div><div class="abs" id="gutline"></div>
<div class="abs" id="hl"></div>
<div class="sep" style="top:205px"></div><div class="sep" style="top:238px"></div><div class="sep" style="top:291px"></div><div class="sep" style="top:388px"></div><div class="sep" style="top:441px"></div>
<span id="m0" class="t m b" style="left:387.6px;top:162.1px;transform:scaleX(0.9843)">Edit Value...</span>
<span id="m1" class="t m " style="left:387.6px;top:184.0px;transform:scaleX(0.9613)">Edit User Parameter Default Values...</span>
<span id="m2" class="t m " style="left:387.6px;top:215.9px;transform:scaleX(0.9552)">Manage User Parameters...</span>
<span id="m3" class="t m dis" style="left:387.6px;top:248.1px;transform:scaleX(1.0160)">Move Up</span>
<span id="m4" class="t m " style="left:387.6px;top:269.8px;transform:scaleX(1.0180)">Move Down</span>
<span id="m5" class="t m " style="left:387.6px;top:301.1px;transform:scaleX(1.0137)">Copy</span>
<span id="s5" class="t m" style="left:601.5px;top:301.1px;transform:scaleX(1.0162)">Ctrl+C</span>
<span id="m6" class="t m " style="left:387.6px;top:323.0px;transform:scaleX(1.0154)">Duplicate</span>
<span id="s6" class="t m" style="left:601.5px;top:323.0px;transform:scaleX(1.0540)">Ctrl+D</span>
<span id="m7" class="t m " style="left:387.6px;top:344.8px;transform:scaleX(1.0004)">Delete</span>
<span id="m8" class="t m " style="left:387.6px;top:366.7px;transform:scaleX(1.0042)">Apply to...</span>
<span id="m9" class="t m " style="left:387.6px;top:398.1px;transform:scaleX(0.9792)">Create Deployment Parameter...</span>
<span id="m10" class="t m " style="left:387.6px;top:420.0px;transform:scaleX(0.9801)">Replace with Deployment Parameter...</span>
<span id="m11" class="t m " style="left:387.6px;top:450.9px;transform:scaleX(0.9544)">Show References</span>
<svg width="658" height="478" viewBox="0 0 658 478"><path d="M372.60 221.90 L372.59 221.62 L372.57 221.34 L372.53 221.06 L373.33 220.60 L374.08 220.06 L374.56 219.65 L374.52 219.52 L374.39 219.14 L374.23 218.77 L374.06 218.40 L373.87 218.05 L373.66 217.71 L373.43 217.37 L373.18 217.05 L372.92 216.75 L372.83 216.65 L372.24 216.86 L371.39 217.25 L370.60 217.70 L370.37 217.53 L370.14 217.37 L369.90 217.22 L369.65 217.09 L369.40 216.97 L369.14 216.86 L369.14 215.94 L369.04 215.02 L368.93 214.40 L368.80 214.37 L368.40 214.29 L368.00 214.24 L367.60 214.21 L367.20 214.20 L366.80 214.21 L366.40 214.24 L366.00 214.29 L365.60 214.37 L365.47 214.40 L365.36 215.02 L365.26 215.94 L365.26 216.86 L365.00 216.97 L364.75 217.09 L364.50 217.22 L364.26 217.37 L364.03 217.53 L363.80 217.70 L363.01 217.25 L362.16 216.86 L361.57 216.65 L361.48 216.75 L361.22 217.05 L360.97 217.37 L360.74 217.71 L360.53 218.05 L360.34 218.40 L360.17 218.77 L360.01 219.14 L359.88 219.52 L359.84 219.65 L360.32 220.06 L361.07 220.60 L361.87 221.06 L361.83 221.34 L361.81 221.62 L361.80 221.90 L361.81 222.18 L361.83 222.46 L361.87 222.74 L361.07 223.20 L360.32 223.74 L359.84 224.15 L359.88 224.28 L360.01 224.66 L360.17 225.03 L360.34 225.40 L360.53 225.75 L360.74 226.09 L360.97 226.43 L361.22 226.75 L361.48 227.05 L361.57 227.15 L362.16 226.94 L363.01 226.55 L363.80 226.10 L364.03 226.27 L364.26 226.43 L364.50 226.58 L364.75 226.71 L365.00 226.83 L365.26 226.94 L365.26 227.86 L365.36 228.78 L365.47 229.40 L365.60 229.43 L366.00 229.51 L366.40 229.56 L366.80 229.59 L367.20 229.60 L367.60 229.59 L368.00 229.56 L368.40 229.51 L368.80 229.43 L368.93 229.40 L369.04 228.78 L369.14 227.86 L369.14 226.94 L369.40 226.83 L369.65 226.71 L369.90 226.58 L370.14 226.43 L370.37 226.27 L370.60 226.10 L371.39 226.55 L372.24 226.94 L372.83 227.15 L372.92 227.05 L373.18 226.75 L373.43 226.43 L373.66 226.09 L373.87 225.75 L374.06 225.40 L374.23 225.03 L374.39 224.66 L374.52 224.28 L374.56 224.15 L374.08 223.74 L373.33 223.20 L372.53 222.74 L372.57 222.46 L372.59 222.18 L372.60 221.90Z" fill="none" stroke="#1a1a1a" stroke-width="1.2" stroke-linejoin="round"/><circle cx="367.2" cy="221.9" r="1.8" fill="none" stroke="#1a1a1a" stroke-width="1.1"/></svg>
</div></div>
<svg width="658" height="478" viewBox="0 0 658 478"><path d="M312.02 157.02 L311.98 157.13 L311.95 157.23 L311.91 157.33 L311.86 157.46 L311.81 157.62 L311.74 157.83 L311.66 158.09 L311.57 158.43 L311.45 158.86 L311.32 159.37 L311.17 159.95 L311.00 160.57 L310.80 161.27 L310.58 162.04 L310.34 162.89 L310.10 163.83 L309.86 164.86 L309.62 166.00 L309.39 167.25 L309.16 168.62 L308.94 170.13 L308.72 171.80 L308.50 173.61 L308.27 175.52 L308.05 177.51 L307.83 179.54 L307.62 181.60 L307.42 183.64 L307.23 185.64 L307.05 187.58 L306.89 189.47 L306.74 191.35 L306.59 193.24 L306.45 195.13 L306.32 197.01 L306.20 198.90 L306.09 200.78 L305.99 202.67 L305.89 204.55 L305.80 206.44 L305.72 208.35 L305.64 210.30 L305.58 212.27 L305.52 214.25 L305.47 216.22 L305.42 218.16 L305.39 220.06 L305.37 221.89 L305.35 223.65 L305.35 225.31 L305.35 226.85 L305.36 228.25 L305.37 229.55 L305.40 230.80 L305.43 232.01 L305.48 233.23 L305.54 234.47 L305.63 235.77 L305.73 237.17 L305.86 238.69 L306.02 240.34 L306.22 242.09 L306.44 243.91 L306.69 245.78 L306.94 247.68 L307.21 249.60 L307.47 251.51 L307.72 253.39 L307.95 255.22 L308.16 256.99 L308.35 258.71 L308.52 260.40 L308.67 262.08 L308.82 263.75 L308.97 265.42 L309.12 267.08 L309.28 268.75 L309.45 270.42 L309.65 272.11 L309.87 273.81 L310.11 275.50 L310.36 277.20 L310.63 278.89 L310.90 280.58 L311.19 282.28 L311.50 283.97 L311.81 285.67 L312.15 287.37 L312.49 289.06 L312.86 290.76 L313.24 292.48 L313.66 294.24 L314.09 296.01 L314.54 297.79 L315.00 299.56 L315.47 301.30 L315.94 303.00 L316.40 304.64 L316.86 306.21 L317.30 307.70 L317.73 309.10 L318.14 310.42 L318.55 311.68 L318.96 312.90 L319.36 314.07 L319.78 315.21 L320.21 316.34 L320.65 317.45 L321.12 318.56 L321.61 319.69 L322.14 320.82 L322.69 321.95 L323.26 323.07 L323.84 324.18 L324.44 325.26 L325.04 326.31 L325.64 327.33 L326.24 328.31 L326.83 329.25 L327.40 330.13 L327.97 330.96 L328.53 331.74 L329.08 332.46 L329.63 333.13 L330.17 333.76 L330.72 334.37 L331.26 334.97 L331.81 335.55 L332.38 336.14 L332.97 336.76 L333.60 337.42 L334.27 338.09 L334.95 338.76 L335.65 339.42 L336.36 340.09 L337.07 340.74 L337.77 341.39 L338.47 342.01 L339.15 342.62 L339.81 343.20 L340.44 343.76 L341.06 344.31 L341.67 344.85 L342.28 345.39 L342.90 345.93 L343.54 346.46 L344.20 346.97 L344.88 347.48 L345.59 347.97 L346.35 348.45 L347.17 348.91 L348.06 349.35 L348.97 349.77 L349.88 350.16 L350.78 350.53 L351.64 350.86 L352.43 351.16 L353.12 351.42 L353.69 351.64 L354.12 351.82 L355.88 347.78 L355.42 347.57 L354.83 347.30 L354.14 347.00 L353.39 346.66 L352.59 346.30 L351.78 345.91 L350.96 345.52 L350.19 345.12 L349.48 344.73 L348.85 344.35 L348.27 343.97 L347.70 343.57 L347.14 343.14 L346.57 342.70 L346.01 342.23 L345.43 341.75 L344.85 341.24 L344.25 340.71 L343.63 340.16 L342.99 339.60 L342.33 339.02 L341.67 338.43 L340.99 337.83 L340.31 337.21 L339.63 336.58 L338.95 335.94 L338.29 335.31 L337.65 334.68 L337.03 334.05 L336.43 333.44 L335.85 332.83 L335.30 332.25 L334.77 331.69 L334.27 331.15 L333.79 330.61 L333.32 330.06 L332.85 329.48 L332.38 328.87 L331.90 328.20 L331.40 327.47 L330.87 326.66 L330.32 325.78 L329.76 324.87 L329.19 323.91 L328.63 322.91 L328.07 321.90 L327.52 320.86 L326.98 319.81 L326.47 318.76 L325.99 317.71 L325.53 316.67 L325.10 315.64 L324.69 314.60 L324.29 313.54 L323.90 312.46 L323.51 311.35 L323.13 310.18 L322.73 308.96 L322.32 307.67 L321.90 306.30 L321.45 304.84 L320.99 303.31 L320.52 301.69 L320.04 300.03 L319.56 298.32 L319.08 296.59 L318.62 294.85 L318.17 293.12 L317.74 291.41 L317.34 289.74 L316.96 288.09 L316.59 286.43 L316.24 284.78 L315.90 283.13 L315.57 281.47 L315.25 279.82 L314.95 278.16 L314.66 276.50 L314.39 274.85 L314.13 273.19 L313.89 271.56 L313.68 269.93 L313.49 268.30 L313.31 266.66 L313.14 265.02 L312.98 263.36 L312.81 261.69 L312.64 259.99 L312.45 258.26 L312.24 256.51 L312.00 254.70 L311.74 252.84 L311.47 250.95 L311.19 249.03 L310.91 247.12 L310.63 245.24 L310.37 243.39 L310.13 241.61 L309.92 239.91 L309.74 238.31 L309.60 236.83 L309.48 235.48 L309.38 234.22 L309.30 233.02 L309.23 231.86 L309.18 230.68 L309.14 229.47 L309.11 228.19 L309.08 226.80 L309.05 225.29 L309.03 223.64 L309.01 221.90 L309.01 220.08 L309.01 218.20 L309.02 216.28 L309.04 214.32 L309.07 212.36 L309.10 210.40 L309.15 208.46 L309.20 206.56 L309.26 204.69 L309.33 202.82 L309.40 200.95 L309.48 199.07 L309.58 197.20 L309.67 195.33 L309.78 193.45 L309.90 191.58 L310.02 189.70 L310.15 187.82 L310.28 185.90 L310.44 183.90 L310.60 181.87 L310.77 179.82 L310.95 177.79 L311.13 175.82 L311.31 173.91 L311.49 172.12 L311.67 170.47 L311.84 168.98 L312.01 167.66 L312.18 166.46 L312.37 165.36 L312.55 164.36 L312.73 163.45 L312.91 162.61 L313.07 161.84 L313.22 161.12 L313.36 160.46 L313.48 159.83 L313.56 159.29 L313.63 158.86 L313.68 158.51 L313.71 158.24 L313.73 158.03 L313.75 157.86 L313.75 157.72 L313.76 157.61 L313.77 157.50 L313.78 157.38Z" fill="#f4511e"/><circle cx="312.9" cy="157.2" r="0.9" fill="#f4511e"/><path d="M347.4 341.4 L358.3 350.6 L345.2 356.2" fill="none" stroke="#f4511e" stroke-width="3.6" stroke-linecap="round" stroke-linejoin="miter" stroke-miterlimit="10"/></svg>
</body></html>
